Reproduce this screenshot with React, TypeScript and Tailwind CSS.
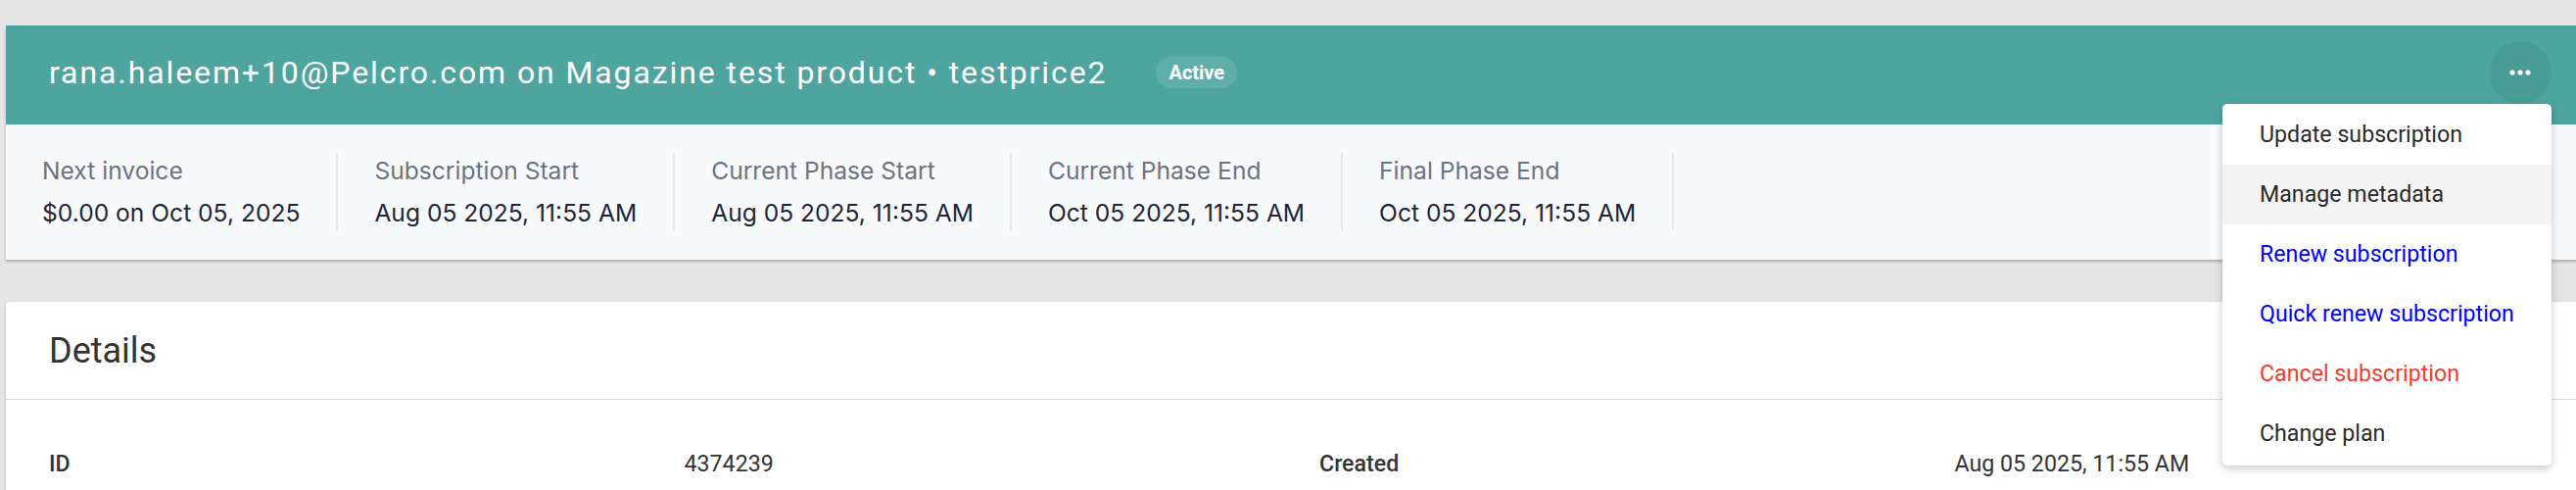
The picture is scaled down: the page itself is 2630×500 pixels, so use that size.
const stats = [
  { label: "Next invoice", value: "$0.00 on Oct 05, 2025" },
  { label: "Subscription Start", value: "Aug 05 2025, 11:55 AM" },
  { label: "Current Phase Start", value: "Aug 05 2025, 11:55 AM" },
  { label: "Current Phase End", value: "Oct 05 2025, 11:55 AM" },
  { label: "Final Phase End", value: "Oct 05 2025, 11:55 AM" },
];

const menuItems = [
  { label: "Update subscription", color: "text-[#2b2b2b]" },
  { label: "Manage metadata", color: "text-[#2b2b2b]", active: true },
  { label: "Renew subscription", color: "text-[#0000ff]" },
  { label: "Quick renew subscription", color: "text-[#0000ff]" },
  { label: "Cancel subscription", color: "text-[#f23b2f]" },
  { label: "Change plan", color: "text-[#2b2b2b]" },
];

const App: React.FC = () => {
  return (
    <div className="h-[500px] w-full overflow-hidden bg-[#e4e5e4] font-['Roboto',_'Liberation_Sans',_sans-serif]">
      <div className="w-[2688px] pl-[6px] pt-[26px]">
        {/* Subscription summary card */}
        <div className="rounded-t-[3px] shadow-[0_2px_3px_rgba(0,0,0,0.25)]">
          <div className="flex h-[101px] items-center bg-[#4ea59f] pb-[5px] pl-[44px] pr-[83px]">
            <h1 className="text-[32px] leading-[40px] tracking-[1.9px] text-white">
              rana.haleem+10@Pelcro.com on Magazine test product • testprice2
            </h1>
            <span className="ml-[50px] flex h-[32px] items-center rounded-full bg-white/10 px-[13px] text-[20px] font-bold text-white">
              Active
            </span>

            {/* Actions button + open menu */}
            <div className="relative ml-auto">
              <button className="flex h-[64px] w-[64px] items-center justify-center rounded-full bg-black/5">
                <svg width="22" height="6" viewBox="0 0 22 6" fill="white">
                  <circle cx="3" cy="3" r="2.6" />
                  <circle cx="11" cy="3" r="2.6" />
                  <circle cx="19" cy="3" r="2.6" />
                </svg>
              </button>
              <div className="absolute right-0 top-full z-10 w-[336px] rounded-[5px] bg-white pb-[2px] pt-[1px] shadow-[0_3px_8px_rgba(0,0,0,0.22)]">
                {menuItems.map((item) => (
                  <div
                    key={item.label}
                    className={`flex h-[61px] items-center pl-[38px] text-[23.2px] ${item.color} ${item.active ? "bg-[#f4f4f4]" : ""}`}
                  >
                    {item.label}
                  </div>
                ))}
              </div>
            </div>
          </div>

          <div className="flex bg-[#f8f9fb] pb-[30px] pt-[29px] font-['Inter',_'Liberation_Sans',_sans-serif]">
            {stats.map((s) => (
              <div key={s.label} className="flex flex-col border-r-2 border-[#e6e8ec] px-[37px] py-[2px]">
                <span className="text-[24.6px] leading-[32px] text-[#6b7282]">{s.label}</span>
                <span className="mt-[11px] text-[24.6px] leading-[32px] text-[#1f2537]">{s.value}</span>
              </div>
            ))}
          </div>
        </div>

        {/* Details card */}
        <div className="mt-[43px] rounded-t-[3px] bg-white shadow-[0_1px_3px_rgba(0,0,0,0.2)]">
          <div className="flex h-[100px] items-center border-b border-[#d9d9d9] px-[44px]">
            <h2 className="text-[36px] text-[#333333]">Details</h2>
          </div>
          <div className="grid grid-cols-4 px-[44px] pb-[40px] pt-[48px] text-[23.2px] text-[#333333]">
            <div className="font-medium">ID</div>
            <div>4374239</div>
            <div className="font-medium">Created</div>
            <div>Aug 05 2025, 11:55 AM</div>
          </div>
        </div>
      </div>
    </div>
  );
};

export default App;
